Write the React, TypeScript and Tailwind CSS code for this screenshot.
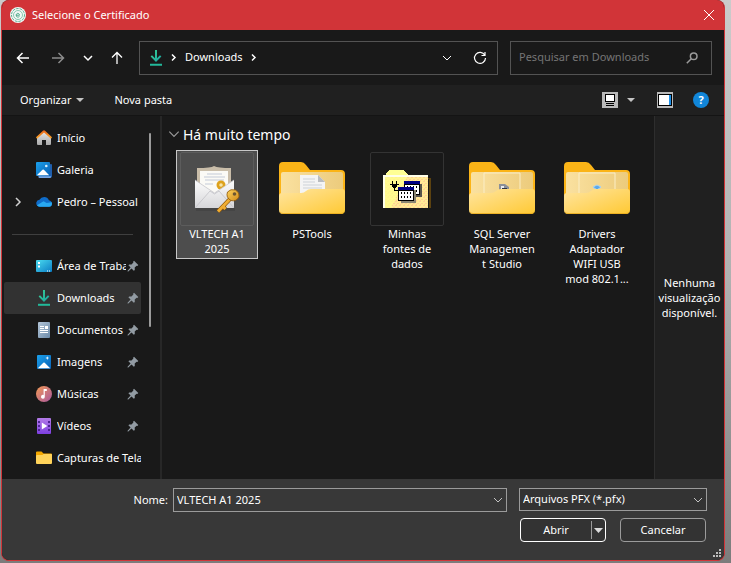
import React from 'react';

type IconProps = { className?: string };

function Chevron({ className }: IconProps) {
  return (
    <svg className={className} viewBox="0 0 12 12" fill="none" stroke="currentColor" aria-hidden="true">
      <path d="M2 4l4 4 4-4" />
    </svg>
  );
}

function DownloadIcon({ className }: IconProps) {
  return (
    <svg className={className} viewBox="0 0 16 16" aria-hidden="true">
      <defs>
        <linearGradient id="download" x1="0" y1="0" x2="1" y2="1">
          <stop offset="0" stopColor="#3ccf91" />
          <stop offset="1" stopColor="#16a3a3" />
        </linearGradient>
      </defs>
      <path d="M9 0H7v8.200L4 5.200 2.600 6.600 8 12l5.400-5.400L12 5.200l-3 3z" fill="url(#download)" />
      <path d="M2 13.800h12v2H2z" fill="#22b99a" />
    </svg>
  );
}

function AppLogo() {
  return (
    <svg className="size-4" viewBox="0 0 16 16" fill="none" aria-hidden="true">
      <circle cx="8" cy="8" r="8" fill="#f3f7f5" />
      <circle cx="8" cy="8" r="6.500" stroke="#45a884" strokeWidth=".9" strokeDasharray="2.500 1" />
      <circle cx="8" cy="8" r="4.500" stroke="#6fbda0" strokeWidth=".8" />
      <path d="M6.200 8.200h3.300c0-2.400-3.300-2.400-3.300 0 0 2.200 2.200 2.200 3.200 1.300" stroke="#3aa07c" strokeWidth=".9" />
    </svg>
  );
}

function HomeIcon() {
  return (
    <svg className="size-4" viewBox="0 0 16 16" aria-hidden="true">
      <defs>
        <linearGradient id="wall" x1="0" y1="0" x2="0" y2="1">
          <stop offset="0" stopColor="#e6e6e6" />
          <stop offset="1" stopColor="#a9a9a9" />
        </linearGradient>
        <linearGradient id="roof" x1="0" y1="0" x2="0" y2="1">
          <stop offset="0" stopColor="#e8641b" />
          <stop offset="1" stopColor="#fba526" />
        </linearGradient>
      </defs>
      <path d="M1 7L8 1.500 15 7v7q0 1-1 1h-4v-5H6v5H2q-1 0-1-1z" fill="url(#wall)" />
      <path d="M0 7.300L6.900.7q1.100-.9 2.200 0L16 7.300l-1 1.400-7-6.300-7 6.300z" fill="url(#roof)" />
    </svg>
  );
}

function PictureIcon({ stacked = false }: { stacked?: boolean }) {
  return (
    <svg className="size-4" viewBox="0 0 16 16" aria-hidden="true">
      <defs>
        <linearGradient id="sky" x1="0" y1="0" x2="1" y2="1">
          <stop offset="0" stopColor="#1aa1ec" />
          <stop offset="1" stopColor="#0a61b5" />
        </linearGradient>
      </defs>
      {stacked ? (
        <>
          <path d="M14.500 2H15q1 0 1 1v11.500q0 1-1 1H3.500q-1 0-1-1z" fill="#1f5fae" />
          <path d="M2.500 14.300H15V15q0 1-1 1H3.500q-1 0-1-1z" fill="#76a8e6" />
          <rect width="14" height="14" rx="1" fill="url(#sky)" />
          <path d="M.8 13.300l5.700-5.500q.7-.6 1.400 0l5.300 5.500z" fill="#fff" />
          <circle cx="10.300" cy="4" r="1.300" fill="#d8f0ff" />
        </>
      ) : (
        <>
          <rect x="1" y="1" width="14" height="14" rx="1" fill="url(#sky)" />
          <path d="M1.800 14.300l5.500-5.600q.7-.6 1.400 0l5.500 5.600z" fill="#fff" />
          <path d="M11.300 2.200l.5 1.400 1.400.5-1.400.5-.5 1.400-.5-1.400-1.400-.5 1.400-.5z" fill="#fff" />
        </>
      )}
    </svg>
  );
}

function CloudIcon() {
  return (
    <svg className="size-4" viewBox="0 0 16 16" aria-hidden="true">
      <path d="M3.800 12.800A3.600 3.600 0 0 1 .3 8.500q.6-2.400 3.200-2.700Q5 3 8.200 3q3.300.1 4.700 3.200 3 .6 3.100 3.500-.2 2.900-3 3.100z" fill="#0f6cc9" />
      <path d="M.9 11.300l6.700-4 3 1.800 5.100-.9q.3.600.3 1.500-.2 2.900-3 3.100H3.800Q2 12.700.9 11.300z" fill="#28a8f0" />
    </svg>
  );
}

function DesktopIcon() {
  return (
    <svg className="size-4" viewBox="0 0 16 16" aria-hidden="true">
      <defs>
        <linearGradient id="desk" x1="0" y1="0" x2="1" y2="1">
          <stop offset="0" stopColor="#4bdcf0" />
          <stop offset="1" stopColor="#0b7cc4" />
        </linearGradient>
      </defs>
      <rect y="2" width="16" height="12" rx="1" fill="url(#desk)" />
      <path d="M2 4h2v2H2zM2 7.500h2v2H2zM11 12.500h1v1h-1zM13 12.500h1v1h-1z" fill="#fff" />
    </svg>
  );
}

function DocumentIcon() {
  return (
    <svg className="size-4" viewBox="0 0 16 16" aria-hidden="true">
      <defs>
        <linearGradient id="doc" x1="0" y1="0" x2="1" y2="1">
          <stop offset="0" stopColor="#b4c6d8" />
          <stop offset="1" stopColor="#6b8aa8" />
        </linearGradient>
      </defs>
      <rect x="2" width="12" height="16" rx="1" fill="url(#doc)" />
      <path d="M4 4h4v1H4zM4 6h4v1H4zM9 4h3v3H9zM4 8h8v1H4zM4 10h8v1H4z" fill="#fff" />
    </svg>
  );
}

function MusicIcon() {
  return (
    <svg className="size-4" viewBox="0 0 16 16" aria-hidden="true">
      <defs>
        <linearGradient id="music" x1="0" y1="0" x2="1" y2="1">
          <stop offset="0" stopColor="#f39a55" />
          <stop offset="1" stopColor="#a8579f" />
        </linearGradient>
      </defs>
      <circle cx="8" cy="8" r="8" fill="url(#music)" />
      <path d="M7.600 3h3.200v2H8.800v5.700a1.900 1.900 0 1 1-1.200-1.700z" fill="#fff" />
    </svg>
  );
}

function VideoIcon() {
  return (
    <svg className="size-4" viewBox="0 0 16 16" aria-hidden="true">
      <defs>
        <linearGradient id="video" x1="0" y1="0" x2="0" y2="1">
          <stop offset="0" stopColor="#b37be8" />
          <stop offset="1" stopColor="#7d3fe0" />
        </linearGradient>
      </defs>
      <rect x="1" width="14" height="16" rx="1" fill="url(#video)" />
      <path d="M2 3h2v2H2zM2 7h2v2H2zM2 11h2v2H2zM12 3h2v2h-2zM12 7h2v2h-2zM12 11h2v2h-2z" fill="#4d2493" />
      <path d="M5.800 4.500L11.300 8l-5.500 3.500z" fill="#fff" />
    </svg>
  );
}

function SmallFolderIcon() {
  return (
    <svg className="size-4" viewBox="0 0 16 16" aria-hidden="true">
      <path d="M0 2.500q0-1 1-1h4.500l2 2H15q1 0 1 1V8H0z" fill="#f5a800" />
      <path d="M0 6q0-1 1-1h5.500l1-1H15q1 0 1 1v8q0 1-1 1H1q-1 0-1-1z" fill="#ffd35a" />
    </svg>
  );
}

function PinIcon() {
  return (
    <svg className="size-3 shrink-0" viewBox="0 0 12 12" aria-hidden="true">
      <path d="M7 .8L11.300 5l-1 .9-.7-.2L7.700 7.600l.1 2.300-1 .8-2.300-2.300L1.300 11.500H.6v-.7l3-3.200-2.200-2.300.8-.9 2.300.1 1.900-1.900-.3-.8z" fill="#929ba3" />
    </svg>
  );
}

function FolderIcon({ id, children }: { id: string; children?: React.ReactNode }) {
  return (
    <svg className="mb-[2px] h-[52px] w-[66px]" viewBox="0 0 66 52" aria-hidden="true">
      <defs>
        <linearGradient id={`${id}-front`} x1="0" y1="0" x2="1" y2="1">
          <stop offset="0" stopColor="#ffe5a0" />
          <stop offset="1" stopColor="#ffc933" />
        </linearGradient>
        <linearGradient id={`${id}-inner`} x1="0" y1="0" x2="1" y2="0">
          <stop offset="0" stopColor="#fae1a0" />
          <stop offset="1" stopColor="#eccb7c" />
        </linearGradient>
      </defs>
      <path d="M0 4q0-4 4-4h18q3 0 5 3l4 5h31q4 0 4 4v32H0z" fill="#fbb417" />
      <path d="M2 12q0-2 2-2h58q2 0 2 2v26H2z" fill={`url(#${id}-inner)`} />
      {children}
      <path d="M0 34q0-3 3-3h19q3 0 5-2t5-2h31q3 0 3 3v18q0 4-4 4H4q-4 0-4-4z" fill={`url(#${id}-front)`} />
      <path d="M1 50q1 1.500 3 1.500h58q2 0 3-1.500" fill="none" stroke="#e9a91b" strokeWidth=".8" />
    </svg>
  );
}

function CertificateIcon() {
  return (
    <svg className="size-12" viewBox="0 0 48 48" aria-hidden="true">
      <defs>
        <linearGradient id="envelope" x1="0" y1="0" x2="0" y2="1">
          <stop offset="0" stopColor="#fdfdfd" />
          <stop offset="1" stopColor="#d6d6d9" />
        </linearGradient>
        <linearGradient id="key" x1="0" y1="0" x2="1" y2="1">
          <stop offset="0" stopColor="#ffd45e" />
          <stop offset="1" stopColor="#d08a1a" />
        </linearGradient>
      </defs>
      <path d="M3 43h39v3H3z" fill="#3d3d3d" opacity=".5" />
      <path d="M4 3q14 0 17-2 4 2 17 2v25H4z" fill="#c9bda9" />
      <path d="M7 6h28v25H7z" fill="#fbfaf6" />
      <path d="M14 9h15M11 12h21M12 15h19M12 19h8" stroke="#c3cad8" />
      <circle cx="28" cy="20" r="4.500" fill="#dda11c" />
      <circle cx="28" cy="20" r="1.800" fill="#f6e3a5" />
      <path d="M2 15l19.500 13L41 15v28H2z" fill="url(#envelope)" />
      <path d="M2 43l15-17 4.500 3 4.500-3 15 17" fill="none" stroke="#c2c2c7" strokeWidth=".8" />
      <path d="M2 15l19.500 13L41 15" fill="none" stroke="#c5c5ca" strokeWidth=".8" />
      <path d="M37 34L25 46.500M30 41.500l2.500 2.500" stroke="#8d5709" strokeWidth="4" />
      <path d="M37 34L25 46.500M30 41.500l2.500 2.500" stroke="#f0ad32" strokeWidth="2.800" />
      <path d="M34.500 27q3-3.500 8-2 4.500 2.500 3.500 7-3 5-8 3.500-5.500-3-3.500-8.500z" fill="url(#key)" stroke="#8d5709" strokeWidth=".8" />
      <circle cx="41.500" cy="29" r="1.800" fill="#6d5632" />
    </svg>
  );
}

function DataSourceIcon() {
  return (
    <svg className="h-10 w-12" viewBox="0 0 48 40" shapeRendering="crispEdges" aria-hidden="true">
      <defs>
        <pattern id="dither" width="4" height="4" patternUnits="userSpaceOnUse">
          <path d="M0 0h4v4H0z" fill="#ffeb94" />
          <path d="M0 0h2v1H0zM2 2h2v1H2zM1 3h1v1H1z" fill="#ffcf94" />
        </pattern>
      </defs>
      <path d="M3 9h45v30H46V10H3z" fill="#5c4210" />
      <path d="M0 6h3l3-5h15l4 5h20v33H0z" fill="url(#dither)" />
      <path d="M3 5l3-4h15l4 5H3z" fill="#ffff94" />
      <path d="M2 8h22L8 39H2z" fill="#ffff8c" opacity=".75" />
      <path d="M0 6h2v33H0zM2 6h43v2H2z" fill="#ffffe8" />
      <path d="M9 12h1v3H9zM13 12h1v3h-1zM7 15h9v1H7zM9 16h5v2H9zM10 18h3v1h-3zM11 19h1v2h-1zM11 21h5v1h-5z" fill="#000" />
      <path d="M24 15h15v13H24z" fill="#55534a" />
      <path d="M21 12h16v14H21z" fill="#000" />
      <path d="M22 16h14v9H22z" fill="#fff" />
      <path d="M21 12h16v3H21z" fill="#000084" />
      <path d="M24 17h1v2h-1zM27 17h1v2h-1zM30 17h1v2h-1zM33 17h1v2h-1zM33 21h1v2h-1z" fill="#000" />
      <path d="M18 21h15v13H18z" fill="#8a8672" />
      <path d="M15 18h16v14H15z" fill="#000" />
      <path d="M16 22h14v9H16z" fill="#fff" />
      <path d="M15 18h16v3H15z" fill="#000084" />
      <path d="M18 23h1v2h-1zM21 23h1v2h-1zM24 23h1v2h-1zM27 23h1v2h-1zM18 27h1v2h-1zM21 27h1v2h-1zM24 27h1v2h-1zM27 27h1v2h-1z" fill="#000" />
    </svg>
  );
}

const shortcuts = [
  { name: 'Área de Trabalho', icon: <DesktopIcon />, pinned: true },
  { name: 'Downloads', icon: <DownloadIcon className="size-4" />, pinned: true, active: true },
  { name: 'Documentos', icon: <DocumentIcon />, pinned: true },
  { name: 'Imagens', icon: <PictureIcon />, pinned: true },
  { name: 'Músicas', icon: <MusicIcon />, pinned: true },
  { name: 'Vídeos', icon: <VideoIcon />, pinned: true },
  { name: 'Capturas de Tela', icon: <SmallFolderIcon /> },
];

const files = [
  { lines: ['VLTECH A1', '2025'], icon: <CertificateIcon />, framed: true, selected: true },
  {
    lines: ['PSTools'],
    icon: (
      <FolderIcon id="pstools">
        <path d="M21 13h18l7 7v14H21z" fill="#f4f4f4" />
        <path d="M39 13l7 7h-7z" fill="#b9bcc0" />
        <path d="M24 17h12M24 20h12M24 23h19M24 26h19" stroke="#cdd2d8" />
      </FolderIcon>
    ),
  },
  { lines: ['Minhas', 'fontes de', 'dados'], icon: <DataSourceIcon />, framed: true },
  {
    lines: ['SQL Server', 'Managemen', 't Studio'],
    icon: (
      <FolderIcon id="sql">
        <path d="M15 34V11h36v23" fill="none" stroke="#fbeec6" />
        <path d="M30 22h6l4 3v7H30z" fill="#8b9099" />
        <path d="M32 24h3v3h-3z" fill="#e8ebef" />
        <path d="M33 26h5v2h-5z" fill="#2f3540" />
      </FolderIcon>
    ),
  },
  {
    lines: ['Drivers', 'Adaptador', 'WIFI USB', 'mod 802.1...'],
    icon: (
      <FolderIcon id="drivers">
        <path d="M15 34V11h36v23" fill="none" stroke="#fbeec6" />
        <path d="M29 25l4-2 4 2-4 3z" fill="#5da8e8" stroke="#a8d4f5" />
      </FolderIcon>
    ),
  },
];

function SidebarItem({ name, icon, pinned, active, expandable }: {
  name: string;
  icon: React.ReactNode;
  pinned?: boolean;
  active?: boolean;
  expandable?: boolean;
}) {
  return (
    <li>
      <a
        href="#"
        className={`ml-[2px] flex h-8 items-center ${active ? 'rounded-xs bg-[#323232]' : ''}`}
      >
        <span className="flex w-8 shrink-0 pl-2">
          {expandable && <Chevron className="size-3 -rotate-90 stroke-[1.5] text-[#d0d0d0]" />}
        </span>
        <span className="shrink-0">{icon}</span>
        <span className="ml-[5px] min-w-0 flex-1 overflow-hidden whitespace-nowrap">{name}</span>
        {pinned && <span className="mr-[2px] ml-px shrink-0"><PinIcon /></span>}
      </a>
    </li>
  );
}

export default function App() {
  return (
    <div className="min-h-screen bg-linear-to-b from-[#cbcbcb] via-[#b0b0b0] to-[#7c7c7c] pr-[6px] pb-[2px] pl-px font-['Noto_Sans','Open_Sans',sans-serif] text-[11px] text-white">
      <div className="flex min-h-[561px] flex-col overflow-hidden rounded-lg border-x border-b border-[#d13438] bg-[#191919]">
        {/* Title bar */}
        <header className="flex h-[30px] shrink-0 items-center bg-[#d13438] pr-[9px] pl-2">
          <AppLogo />
          <h1 className="ml-[6px] flex-1">Selecione o Certificado</h1>
          <button type="button" aria-label="Fechar">
            <svg className="size-3" viewBox="0 0 12 12" fill="none" stroke="currentColor">
              <path d="M1 1l10 10M11 1L1 11" />
            </svg>
          </button>
        </header>

        {/* Navigation */}
        <div className="flex h-[55px] shrink-0 items-center pr-3 pl-[13px]">
          <button type="button" aria-label="Voltar">
            <svg className="size-4" viewBox="0 0 16 16" fill="none" stroke="currentColor" strokeWidth="1.500">
              <path d="M14 8H2.500M7.500 3L2.500 8l5 5" />
            </svg>
          </button>
          <button type="button" aria-label="Avançar" className="ml-[19px] text-[#8c8c8c]">
            <svg className="size-4" viewBox="0 0 16 16" fill="none" stroke="currentColor" strokeWidth="1.500">
              <path d="M2 8h11.500M8.500 3l5 5-5 5" />
            </svg>
          </button>
          <button type="button" aria-label="Locais recentes" className="ml-4">
            <Chevron className="size-3 stroke-[1.5]" />
          </button>
          <button type="button" aria-label="Para cima" className="ml-[15px]">
            <svg className="size-4" viewBox="0 0 16 16" fill="none" stroke="currentColor" strokeWidth="1.300">
              <path d="M8 14V2.500M3 7.500l5-5 5 5" />
            </svg>
          </button>

          <div className="ml-[14px] flex h-[34px] flex-1 items-center border border-[#535353] pr-[10px] pl-2">
            <DownloadIcon className="size-4" />
            <Chevron className="ml-[5px] size-[9px] -rotate-90 stroke-2" />
            <a href="#" className="ml-[7px]">Downloads</a>
            <Chevron className="ml-[6px] size-[9px] -rotate-90 stroke-2" />
            <button type="button" aria-label="Histórico" className="ml-auto">
              <Chevron className="size-3" />
            </button>
            <button type="button" aria-label="Atualizar" className="ml-5">
              <svg className="size-[14px]" viewBox="0 0 14 14" fill="none" stroke="currentColor" strokeWidth="1.200">
                <path d="M11.800 4.200A5.500 5.500 0 1 0 12.500 7M12 1v3.500H8.500" />
              </svg>
            </button>
          </div>

          <label className="ml-3 flex h-[34px] w-[202px] items-center border border-[#535353] pr-[13px] pl-2">
            <input
              type="search"
              aria-label="Pesquisar em Downloads"
              placeholder="Pesquisar em Downloads"
              className="min-w-0 flex-1 bg-transparent outline-none placeholder:text-[#757575]"
            />
            <svg className="size-3" viewBox="0 0 12 12" fill="none" stroke="#9a9a9a" strokeWidth="1.500" aria-hidden="true">
              <circle cx="7.700" cy="4.300" r="3.300" />
              <path d="M5.300 6.700L.8 11.200" />
            </svg>
          </label>
        </div>

        {/* Toolbar */}
        <div className="flex h-[30px] shrink-0 items-center bg-[#202020] pr-[15px] pl-[18px]">
          <button type="button" className="flex items-center">
            Organizar
            <svg className="ml-[5px] h-1 w-2" viewBox="0 0 8 4" fill="#c4c4c4" aria-hidden="true">
              <path d="M0 0h8L4 4z" />
            </svg>
          </button>
          <button type="button" className="ml-[30px]">Nova pasta</button>
          <button type="button" aria-label="Alterar modo de exibição" className="ml-auto">
            <svg className="size-4" viewBox="0 0 16 16" shapeRendering="crispEdges">
              <rect width="16" height="16" rx="1" fill="#b8b8b8" />
              <path d="M3 2h10v8H3z" fill="#000" />
              <path d="M4 3h8v6H4z" fill="#fff" />
              <path d="M4 11h8v1H4zM4 13h8v1H4z" fill="#000" />
            </svg>
          </button>
          <button type="button" aria-label="Mais opções" className="ml-[9px]">
            <svg className="h-1 w-2" viewBox="0 0 8 4" fill="#c4c4c4">
              <path d="M0 0h8L4 4z" />
            </svg>
          </button>
          <button type="button" aria-label="Painel de visualização" className="ml-[22px]">
            <svg className="size-4" viewBox="0 0 16 16" shapeRendering="crispEdges">
              <rect width="16" height="16" rx="1" fill="#b8b8b8" />
              <path d="M1 2h14v12H1z" fill="#000" />
              <path d="M2 3h10v10H2z" fill="#fff" />
              <path d="M12 3h2v10h-2z" fill="#1a8fe8" />
            </svg>
          </button>
          <button type="button" aria-label="Ajuda" className="ml-5 flex size-4 items-center justify-center rounded-full bg-[#1186d9] font-bold">
            ?
          </button>
        </div>

        {/* Content */}
        <div className="flex flex-1 border-t border-[#141414]">
          <div className="flex w-[160px] shrink-0 border-r-2 border-[#272727]">
            <nav className="w-[139px] pt-[6px]" aria-label="Pastas">
              <ul>
                <SidebarItem name="Início" icon={<HomeIcon />} />
                <SidebarItem name="Galeria" icon={<PictureIcon stacked />} />
                <SidebarItem name="Pedro – Pessoal" icon={<CloudIcon />} expandable />
              </ul>
              <div className="flex h-8 items-center pr-2 pl-[10px]">
                <hr className="flex-1 border-[#3f3f3f]" />
              </div>
              <ul>
                {shortcuts.map((item) => (
                  <SidebarItem key={item.name} {...item} />
                ))}
              </ul>
            </nav>
            <div className="mt-[17px] ml-2 h-[194px] w-[2px] rounded-full bg-[#9b9b9b]" />
          </div>

          <main className="min-w-0 flex-1 pt-2 pl-[5px]">
            <h2 className="flex h-5 items-center text-[14px]">
              <Chevron className="mr-[2px] size-[14px] text-[#9b9b9b]" />
              Há muito tempo
            </h2>
            <ul className="mt-[6px] ml-[9px] flex items-start gap-[13px]">
              {files.map((file) => (
                <li key={file.lines[0]} className="w-[82px] shrink-0">
                  <button
                    type="button"
                    className={`flex w-full flex-col items-center border pt-px pb-[2px] leading-[15px] ${
                      file.selected ? 'border-[#c8c8c8] bg-[#4d4d4d]' : 'border-transparent'
                    }`}
                  >
                    <span
                      className={`flex h-[74px] w-[74px] items-center justify-center rounded-xs border ${
                        !file.framed ? 'border-transparent' : file.selected ? 'border-[#5c5c5c]' : 'border-[#333333]'
                      }`}
                    >
                      {file.icon}
                    </span>
                    {file.lines.map((line) => (
                      <span key={line} className="whitespace-nowrap">{line}</span>
                    ))}
                  </button>
                </li>
              ))}
            </ul>
          </main>

          <aside className="flex w-[70px] shrink-0 items-center justify-center border-l border-[#2e2e2e] bg-[#202020] text-center leading-[15px]">
            Nenhuma visualização disponível.
          </aside>
        </div>

        {/* Footer */}
        <footer className="shrink-0 bg-[#383838] pt-[9px] pr-[3px] pb-[3px]">
          <div className="flex pr-[14px]">
            <label htmlFor="file-name" className="w-[171px] pt-1 pr-[5px] text-right">Nome:</label>
            <div className="flex h-6 flex-1 items-center border border-[#9b9b9b] pr-[2px] pl-[3px]">
              <input id="file-name" defaultValue="VLTECH A1 2025" className="min-w-0 flex-1 bg-transparent outline-none" />
              <button type="button" aria-label="Nomes recentes">
                <Chevron className="size-3 text-[#c4c4c4]" />
              </button>
            </div>
            <div className="relative ml-3 h-[23px] w-[188px]">
              <select aria-label="Tipo de arquivo" className="h-full w-full appearance-none border border-[#9b9b9b] bg-[#333333] pl-[3px]">
                <option>Arquivos PFX (*.pfx)</option>
              </select>
              <Chevron className="pointer-events-none absolute top-[6px] right-[3px] size-3 text-[#c4c4c4]" />
            </div>
          </div>
          <div className="mt-[6px] flex justify-end gap-[14px] pr-[15px]">
            <div className="flex h-6 w-[86px] items-center rounded-sm border border-white bg-[#333333]">
              <button type="button" className="h-full flex-1">Abrir</button>
              <button type="button" aria-label="Opções de abertura" className="flex h-[18px] w-[14px] items-center justify-center border-l border-[#9b9b9b]">
                <svg className="h-[5px] w-[9px]" viewBox="0 0 9 5" fill="#dcdcdc">
                  <path d="M0 0h9L4.500 5z" />
                </svg>
              </button>
            </div>
            <button type="button" className="h-6 w-[86px] rounded-sm border border-[#9b9b9b] bg-[#333333]">Cancelar</button>
          </div>
          <div className="mt-[7px] flex justify-end">
            <svg className="size-2" viewBox="0 0 8 8" fill="#bdbdbd" shapeRendering="crispEdges" aria-hidden="true">
              <path d="M6 0h2v2H6zM3 3h2v2H3zM6 3h2v2H6zM0 6h2v2H0zM3 6h2v2H3zM6 6h2v2H6z" />
            </svg>
          </div>
        </footer>
      </div>
    </div>
  );
}
